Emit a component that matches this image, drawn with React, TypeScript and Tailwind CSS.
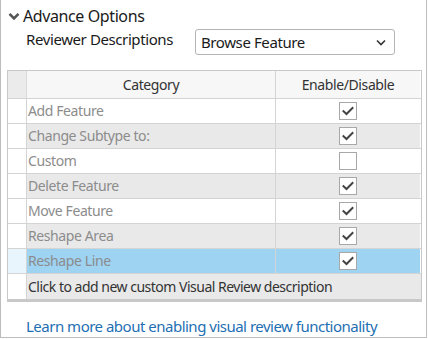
import React from "react";

const rows = [
  { name: "Add Feature", checked: true, bg: "bg-white" },
  { name: "Change Subtype to:", checked: true, bg: "bg-[#e9e9e9]" },
  { name: "Custom", checked: false, bg: "bg-white" },
  { name: "Delete Feature", checked: true, bg: "bg-[#e9e9e9]" },
  { name: "Move Feature", checked: true, bg: "bg-white" },
  { name: "Reshape Area", checked: true, bg: "bg-[#e9e9e9]" },
  { name: "Reshape Line", checked: true, bg: "bg-[#9ed3f2]", sel: true },
];

function Check({ checked }: { checked: boolean }) {
  return (
    <div className="w-[18px] h-[18px] border border-[#a8a8a8] bg-white flex items-center justify-center">
      {checked && (
        <svg width="12" height="10" viewBox="0 0 12 10">
          <path d="M1.5 5.2 L4.5 8 L10.5 2" fill="none" stroke="#444" strokeWidth="2" strokeLinecap="square" />
        </svg>
      )}
    </div>
  );
}

export default function App() {
  return (
    <div
      className="w-[427px] h-[338px] bg-white border-l border-r border-b border-[#bdbdbd] relative"
      style={{ fontFamily: '"Noto Sans", "Open Sans", sans-serif' }}
    >
      <div className="flex items-center h-[32px] pl-[7px]">
        <svg width="12" height="9" viewBox="0 0 12 9">
          <path d="M1.5 1.8 L6 6.3 L10.5 1.8" fill="none" stroke="#555" strokeWidth="2.6" />
        </svg>
        <span className="ml-[3px] text-[16px] text-[#1a1a1a] leading-none tracking-[-0.4px]">Advance Options</span>
      </div>
      <div className="flex items-center h-[26px] -mt-[3px]">
        <span className="ml-[25px] text-[15px] text-[#1a1a1a] leading-none tracking-[-0.4px] -mt-[6px]">Reviewer Descriptions</span>
        <div className="ml-auto mr-[31px] w-[200px] h-[26px] border border-[#b5b5b5] rounded-[3px] flex items-center pl-[5px] pr-[8px]">
          <span className="text-[15px] text-[#1a1a1a] leading-none tracking-[-0.4px]">Browse Feature</span>
          <svg width="10" height="7" viewBox="0 0 10 7" className="ml-auto">
            <path d="M1 1.5 L5 5.5 L9 1.5" fill="none" stroke="#333" strokeWidth="1.6" />
          </svg>
        </div>
      </div>
      <div className="ml-[6px] mt-[15px] w-[415px] border border-[#c8c8c8] border-b-[3px] text-[14px] leading-none tracking-[-0.4px]">
        <div className="flex h-[28px] border-b border-[#d4d4d4]">
          <div className="w-[19px] bg-[#ebebeb] border-r border-[#d9d9d9]" />
          <div className="flex-1 bg-[#f7f7f7] border-r border-[#d4d4d4] flex items-center justify-center text-[#333]">Category</div>
          <div className="w-[144px] bg-[#f7f7f7] flex items-center justify-center text-[#333]">Enable/Disable</div>
          <div className="w-[1px]" />
        </div>
        {rows.map((r) => (
          <div key={r.name} className="flex h-[25px] border-b border-[#d4d4d4]">
            <div className={`w-[19px] border-r border-[#d4d4d4] ${r.sel ? "bg-[#e9f5fd]" : "bg-white"}`} />
            <div className={`flex-1 ${r.bg} border-r border-[#d4d4d4] flex items-center pl-[1px] text-[#8c8c8c]`}>{r.name}</div>
            <div className={`w-[144px] ${r.bg} flex items-center justify-center`}>
              <Check checked={r.checked} />
            </div>
            <div className="w-[1px] bg-white" />
          </div>
        ))}
        <div className="flex h-[25px]">
          <div className="w-[19px] border-r border-[#d4d4d4] bg-white" />
          <div className="flex-1 bg-[#e9e9e9] flex items-center pl-[1px] text-[#333] tracking-[-0.5px]">Click to add new custom Visual Review description</div>
        </div>
      </div>
      <div className="ml-[25px] mt-[17px] text-[15px] text-[#1e6fb3] leading-none tracking-[-0.5px]">
        Learn more about enabling visual review functionality
      </div>
    </div>
  );
}
